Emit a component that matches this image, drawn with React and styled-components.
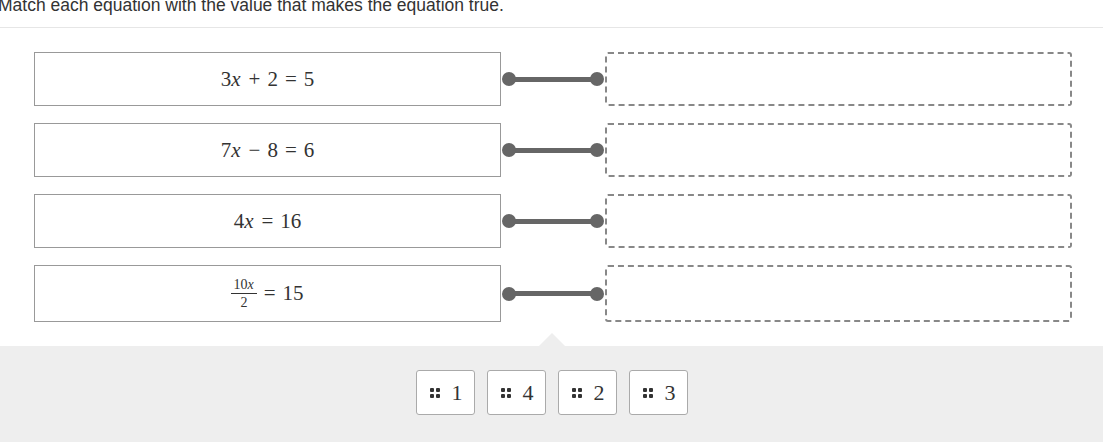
import React from 'react';
import styled, { createGlobalStyle } from 'styled-components';

const GlobalStyle = createGlobalStyle`
  body {
    margin: 0;
    background: #fff;
    overflow: hidden;
  }
`;

const Page = styled.div`
  width: 1103px;
  height: 442px;
  display: flex;
  flex-direction: column;
  overflow: hidden;
`;

const Prompt = styled.div`
  margin: -10px 0 0 -2px;
  padding-bottom: 7px;
  border-bottom: 1px solid #e6e6e6;
  font-family: "Liberation Sans", Arial, sans-serif;
  font-size: 17.5px;
  line-height: 30px;
  color: #333;
  white-space: nowrap;
`;

const Rows = styled.div`
  display: flex;
  flex-direction: column;
  gap: 17px;
  padding: 24px 31px 0 34px;
`;

const Row = styled.div`
  display: grid;
  grid-template-columns: 467px 104px 467px;
  align-items: stretch;
  min-height: ${(props) => props.tall ? '57px' : '54px'};
`;

const EquationBox = styled.div`
  display: flex;
  align-items: center;
  justify-content: center;
  border: 1px solid #999;
  background: #fff;
`;

const DropBox = styled.div`
  border: 2px dashed #888;
  border-radius: 3px;
`;

const Connector = styled.div`
  position: relative;
  display: flex;
  align-items: center;
  padding: 0 1px;

  &::before {
    content: '';
    flex: 1;
    height: 5px;
    margin: 0 7px;
    background: #666;
  }
`;

const Dot = styled.span`
  position: absolute;
  top: 50%;
  ${(props) => props.side === 'left' ? 'left: 1px;' : 'right: 1px;'}
  width: 14px;
  height: 14px;
  margin-top: -7px;
  border-radius: 50%;
  background: #666;
`;

const Math = styled.span`
  font-family: "Liberation Serif", "DejaVu Serif", serif;
  font-size: 21px;
  color: #333;
  display: inline-flex;
  align-items: center;
  white-space: pre;
`;

const Var = styled.i`
  font-style: italic;
  padding-right: 1px;
`;

const Op = styled.span`
  padding: 0 ${(props) => props.pad || 7}px;
`;

const Frac = styled.span`
  display: inline-flex;
  flex-direction: column;
  align-items: center;
  font-size: 14px;
  line-height: 15px;
`;

const Numer = styled.span`
  padding: 0 2px 1px;
  border-bottom: 1px solid #333;
`;

const Denom = styled.span`
  padding-top: 1px;
`;

const Tray = styled.div`
  position: relative;
  margin-top: 24px;
  flex: 1;
  background: #eee;
  display: flex;
  justify-content: center;
  gap: 12px;
  padding-top: 24px;

  &::before {
    content: '';
    position: absolute;
    top: -13px;
    left: 50%;
    margin-left: -13px;
    border-left: 13px solid transparent;
    border-right: 13px solid transparent;
    border-bottom: 13px solid #eee;
  }
`;

const Tile = styled.div`
  box-sizing: border-box;
  width: 59px;
  height: 45px;
  display: flex;
  align-items: center;
  justify-content: center;
  gap: 12px;
  padding-left: 2px;
  background: #fff;
  border: 1px solid #aaa;
  border-radius: 3px;
`;

const Grip = styled.span`
  display: grid;
  grid-template-columns: 4px 4px;
  gap: 2px;
  & > span {
    width: 4px;
    height: 4px;
    border-radius: 1px;
    background: #333;
  }
`;

const TileNum = styled.span`
  font-family: "Liberation Serif", "DejaVu Serif", serif;
  font-size: 22px;
  color: #333;
`;

const equations = [
  (
    <Math>
      3<Var>x</Var><Op>+</Op>2<Op>=</Op>5
    </Math>
  ),
  (
    <Math>
      7<Var>x</Var><Op>−</Op>8<Op>=</Op>6
    </Math>
  ),
  (
    <Math>
      4<Var>x</Var><Op>=</Op>16
    </Math>
  ),
  (
    <Math>
      <Frac>
        <Numer>10<Var>x</Var></Numer>
        <Denom>2</Denom>
      </Frac>
      <Op>=</Op>15
    </Math>
  ),
];

const answers = ['1', '4', '2', '3'];

const App = () => (
  <Page>
    <GlobalStyle />
    <Prompt>Match each equation with the value that makes the equation true.</Prompt>
    <Rows>
      {equations.map((eq, i) => (
        <Row key={i} tall={i === 3}>
          <EquationBox>{eq}</EquationBox>
          <Connector>
            <Dot side="left" />
            <Dot side="right" />
          </Connector>
          <DropBox />
        </Row>
      ))}
    </Rows>
    <Tray>
      {answers.map((a) => (
        <Tile key={a}>
          <Grip><span /><span /><span /><span /></Grip>
          <TileNum>{a}</TileNum>
        </Tile>
      ))}
    </Tray>
  </Page>
);

export default App;
